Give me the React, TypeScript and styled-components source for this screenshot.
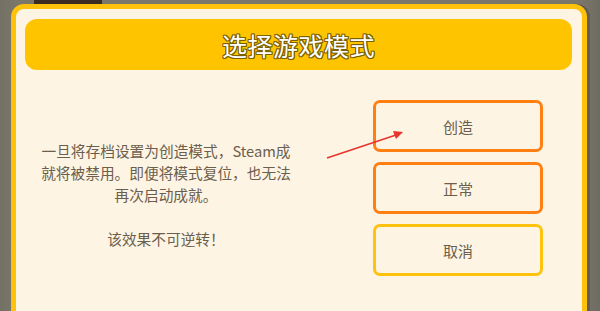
import styled, { createGlobalStyle } from 'styled-components';

const MODES = [
  { label: '创造', tone: 'orange' },
  { label: '正常', tone: 'orange' },
  { label: '取消', tone: 'yellow' },
];

const GlobalStyle = createGlobalStyle`
  html, body {
    margin: 0;
    padding: 0;
    width: 600px;
    height: 311px;
    overflow: hidden;
    background: #797569;
  }
`;

export default function App() {
  return (
    <>
      <GlobalStyle />
      <Screen>
        <Shelf />
        <Panel>
          <TitleBar>
            <Title>选择游戏模式</Title>
          </TitleBar>
          <Body>
            <Message>
              <p>
                一旦将存档设置为创造模式，Steam成
                <br />
                就将被禁用。即便将模式复位，也无法
                <br />
                再次启动成就。
              </p>
              <p>该效果不可逆转！</p>
            </Message>
            <Buttons>
              {MODES.map((mode) => (
                <ModeButton key={mode.label} $tone={mode.tone}>
                  {mode.label}
                </ModeButton>
              ))}
            </Buttons>
          </Body>
          <Arrow width="600" height="311" viewBox="0 0 600 311">
            <line x1="327" y1="158" x2="396" y2="135" stroke="#e8342c" strokeWidth="1.6" />
            <polygon points="403,132 393,131 396,139" fill="#e8342c" />
          </Arrow>
        </Panel>
      </Screen>
    </>
  );
}

const Screen = styled.div`
  position: relative;
  width: 600px;
  height: 311px;
  overflow: hidden;
  padding: 4px 0 0 11px;
  box-sizing: border-box;
  background: linear-gradient(90deg, #737064 0%, #7b776b 3%, #7a7669 97%, #6f6b61 100%);
`;

const Shelf = styled.div`
  position: absolute;
  top: 0;
  left: 34px;
  width: 68px;
  height: 4px;
  background: #3b2b22;
`;

const Panel = styled.div`
  position: relative;
  width: 576px;
  height: 330px;
  box-sizing: border-box;
  border: 5px solid #ffc20a;
  border-radius: 13px;
  background: #fdf4e4;
  box-shadow: 3px 0 0 #625e55;
  display: flex;
  flex-direction: column;
`;

const TitleBar = styled.div`
  margin: 10px 10px 0 9px;
  height: 51px;
  border-radius: 12px;
  background: #ffc400;
  display: flex;
  align-items: center;
  justify-content: center;
`;

const Title = styled.h1`
  margin: 0;
  font-family: 'Noto Sans CJK SC', 'Noto Sans', sans-serif;
  font-size: 25px;
  font-weight: 400;
  letter-spacing: 0.5px;
  color: #ffffff;
  text-shadow:
    1px 0 0 #7a6000, -1px 0 0 #7a6000, 0 1px 0 #7a6000, 0 -1px 0 #7a6000,
    1px 1px 0 #7a6000, -1px -1px 0 #7a6000, 1px -1px 0 #7a6000, -1px 1px 0 #7a6000;
`;

const Body = styled.div`
  display: flex;
  align-items: flex-start;
  padding: 30px 39px 0 0;
`;

const Message = styled.div`
  width: 300px;
  margin-top: 40px;
  font-family: 'Noto Sans CJK SC', 'Noto Sans', sans-serif;
  font-size: 14.7px;
  line-height: 22px;
  color: #6b5e4c;
  text-align: center;

  p {
    margin: 0 0 22px;
  }
`;

const Buttons = styled.div`
  margin-left: auto;
  width: 170px;
  display: flex;
  flex-direction: column;
  gap: 10px;
`;

const ModeButton = styled.div<{ $tone: string }>`
  height: 52px;
  box-sizing: border-box;
  border: 3px solid ${(p) => (p.$tone === 'yellow' ? '#ffc20e' : '#ff7f12')};
  border-radius: 7px;
  display: flex;
  align-items: center;
  justify-content: center;
  font-family: 'Noto Sans CJK SC', 'Noto Sans', sans-serif;
  font-size: 15px;
  color: #6b5e4c;
`;

const Arrow = styled.svg`
  position: absolute;
  left: -16px;
  top: -9px;
  pointer-events: none;
`;
